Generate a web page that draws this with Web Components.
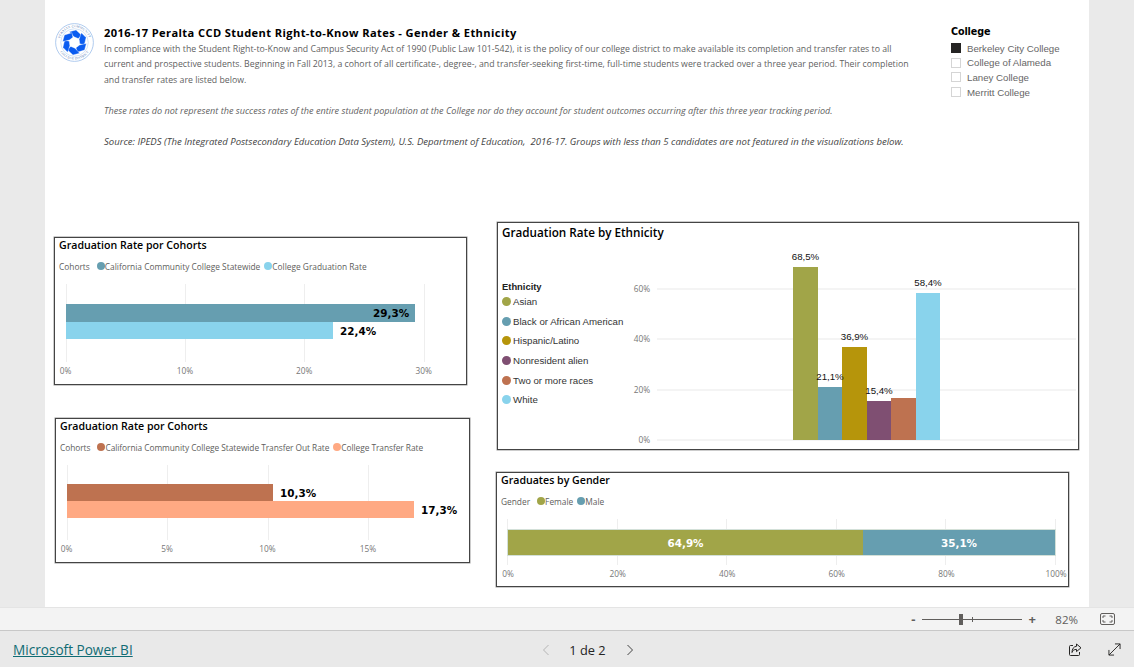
<!DOCTYPE html>
<html lang="en">

<head>
	<meta charset="UTF-8">
	<title>Peralta CCD Student Right-to-Know Rates</title>
	<style>
		html, body { margin: 0; height: 100%; overflow: hidden; background: #eaeaea; }
	</style>
</head>

<body>
	<report-page>
		<report-intro slot="intro"></report-intro>
		<college-slicer slot="intro"></college-slicer>

		<chart-card slot="left" style="--w:413px;--h:148px;--ml:0px;--mt:15px;--title-x:4px" heading="Graduation Rate por Cohorts" legend="Cohorts"
			items='[["California Community College Statewide","#669eb0"],["College Graduation Rate","#89d3ec"]]'>
			<hbar-plot style="--ph:78px;--pt:12px"
				left="10.5" step="119.4" ticks='["0%","10%","20%","30%"]' top="20"
				bars='[[349.5,18,"#669eb0","29,3%",318],[267.5,17,"#89d3ec","22,4%",285]]'></hbar-plot>
		</chart-card>
		<chart-card slot="left" style="--w:415px;--h:145px;--ml:1px;--mt:33px;--title-x:4px;--legend-ls:-.05px" heading="Graduation Rate por Cohorts" legend="Cohorts"
			items='[["California Community College Statewide Transfer Out Rate","#be7250"],["College Transfer Rate","#ffa983"]]'>
			<hbar-plot style="--ph:75px;--pt:12px"
				left="10.5" step="100.5" ticks='["0%","5%","10%","15%"]' top="19"
				bars='[[206.5,17,"#be7250","10,3%",224],[347.5,17,"#ffa983","17,3%",365]]'></hbar-plot>
		</chart-card>

		<ethnicity-card slot="right" style="--mt:0px"></ethnicity-card>
		<chart-card slot="right" style="--w:573px;--h:115px;--ml:-1px;--mt:22px;--title-x:4px" heading="Graduates by Gender" legend="Gender"
			items='[["Female","#a1a548"],["Male","#669eb0"]]'>
			<gender-plot></gender-plot>
		</chart-card>
	</report-page>

	<script>
		// helper: every element gets its own open shadow root
		class Base extends HTMLElement {
			render(html) {
				if (!this.shadowRoot) this.attachShadow({ mode: 'open' });
				this.shadowRoot.innerHTML = html;
			}
		}

		const SEGOE = '"Open Sans", "Noto Sans", sans-serif';

		class ReportPage extends Base {
			connectedCallback() {
				this.render(`
				<style>
					:host { display: grid; grid-template-rows: 607px 24px 36px; height: 667px; width: 1134px; }
					.canvas { width: 1044px; margin-left: 45px; background: #fff; display: grid;
						grid-template-columns: 451px 1fr; grid-template-rows: 222px 1fr; }
					.top { grid-column: 1 / 3; display: flex; justify-content: space-between; }
					.col { display: flex; flex-direction: column; align-items: flex-start; }
					.left { padding-left: 9px; }
					.right { padding-left: 1px; }
				</style>
				<div class="canvas">
					<div class="top"><slot name="intro"></slot></div>
					<div class="col left"><slot name="left"></slot></div>
					<div class="col right"><slot name="right"></slot></div>
				</div>
				<report-toolbar></report-toolbar>
				<report-footer></report-footer>`);
			}
		}

		class ReportIntro extends Base {
			connectedCallback() {
				// blade of the pinwheel, rotated six times
				let blades = '';
				for (let i = 0; i < 6; i++) {
					blades += `<path transform="rotate(${i * 60} 19 19)" d="M14 8.5 L20.5 6.8 L26 12 L22.6 15.2 L18.5 13.5 Z" fill="#0a5cf0" stroke="#fff" stroke-width=".35"/>`;
				}
				this.render(`
				<style>
					:host { display: flex; padding: 23px 0 0 10px; font-family: ${SEGOE}; }
					svg { flex: none; width: 39px; height: 39px; margin-right: 10px; }
					.text { width: 830px; margin-top: 2px; }
					h1 { margin: 0; font: 700 11.1px/16.5px ${SEGOE}; color: #000; letter-spacing: .4px; }
					p { margin: 0; font-size: 8.75px; line-height: 15.6px; color: #5f5f5f; }
					p.i { font-style: italic; font-size: 9.1px; margin-top: 15px; }
					p.s { font-style: italic; font-size: 9.55px; margin-top: 15.5px; color: #444; }
				</style>
				<svg viewBox="0 0 38 38">
					<circle cx="19" cy="19" r="18.4" fill="#fff" stroke="#9fc0ea" stroke-width=".8"/>
					<circle cx="19" cy="19" r="13.4" fill="#fff" stroke="#b5cfee" stroke-width=".6"/>
					<defs>
						<path id="top" d="M4.2 19 A14.8 14.8 0 0 1 33.8 19"/>
						<path id="bot" d="M2.4 19 A16.6 16.6 0 0 0 35.6 19"/>
					</defs>
					<text font-family="Liberation Serif" font-size="3.1" fill="#4c74b0" letter-spacing=".25"><textPath href="#top" startOffset="50%" text-anchor="middle">PERALTA COMMUNITY</textPath></text>
					<text font-family="Liberation Serif" font-size="3.1" fill="#4c74b0" letter-spacing=".25"><textPath href="#bot" startOffset="50%" text-anchor="middle">COLLEGE DISTRICT</textPath></text>
					${blades}
				</svg>
				<div class="text">
					<h1>2016-17 Peralta CCD Student Right-to-Know Rates - Gender &amp; Ethnicity</h1>
					<p>In compliance with the Student Right-to-Know and Campus Security Act of 1990 (Public Law 101-542), it is the policy of our college district to make available its completion and transfer rates to all<br>current and prospective students. Beginning in Fall 2013, a cohort of all certificate-, degree-, and transfer-seeking first-time, full-time students were tracked over a three year period. Their completion<br>and transfer rates are listed below.</p>
					<p class="i">These rates do not represent the success rates of the entire student population at the College nor do they account for student outcomes occurring after this three year tracking period.</p>
					<p class="s">Source: IPEDS (The Integrated Postsecondary Education Data System), U.S. Department of Education,&nbsp; 2016-17. Groups with less than 5 candidates are not featured in the visualizations below.</p>
				</div>`);
			}
		}

		class CollegeSlicer extends Base {
			connectedCallback() {
				const names = ['Berkeley City College', 'College of Alameda', 'Laney College', 'Merritt College'];
				this.render(`
				<style>
					:host { display: block; width: 138px; padding-top: 26px; font-family: "Liberation Sans", Arial, sans-serif; }
					h2 { margin: 0 0 3px; font: 700 9.6px/12px "DejaVu Sans", sans-serif; color: #000; letter-spacing: -.1px; }
					.row { display: flex; align-items: center; height: 14.6px; font-size: 9.7px; color: #666; }
					i { width: 8px; height: 8px; border: 1px solid #d5d5d5; margin-right: 6px; }
					i.on { background: #252423; border-color: #252423; }
				</style>
				<h2>College</h2>
				${names.map((n, i) => `<div class="row"><i class="${i == 0 ? 'on' : ''}"></i>${n}</div>`).join('')}`);
			}
		}

		class ChartCard extends Base {
			connectedCallback() {
				const items = JSON.parse(this.getAttribute('items'));
				this.render(`
				<style>
					:host { display: block; box-sizing: border-box; width: var(--w); height: var(--h); margin: var(--mt) 0 0 var(--ml);
						border: 1px solid #444; box-shadow: 0 0 0 .5px #999; background: #fff; font-family: ${SEGOE}; }
					h3 { margin: 0; padding: 0 0 0 var(--title-x); font: 600 10.6px/14px ${SEGOE}; color: #000; }
					.legend { display: flex; align-items: center; height: 12px; margin-top: 8px; padding-left: var(--title-x);
						font-size: 8.35px; letter-spacing: var(--legend-ls, 0); color: #605e5c; white-space: nowrap; }
					.legend b { font-weight: 400; margin-right: 7px; }
					.legend i { width: 8px; height: 8px; border-radius: 50%; flex: none; }
					.legend span { margin-right: 4px; }
				</style>
				<h3>${this.getAttribute('heading')}</h3>
				<div class="legend"><b>${this.getAttribute('legend')}</b>
					${items.map(it => `<i style="background:${it[1]}"></i><span>${it[0]}</span>`).join('')}
				</div>
				<slot></slot>`);
			}
		}

		class HbarPlot extends Base {
			connectedCallback() {
				const ticks = JSON.parse(this.getAttribute('ticks'));
				const bars = JSON.parse(this.getAttribute('bars'));
				const left = +this.getAttribute('left');
				const step = +this.getAttribute('step');
				let y = +this.getAttribute('top');
				// bar: width, height, colour, label, label x
				const marks = bars.map(b => {
					const s = `<div class="bar" style="left:${left}px;top:${y}px;width:${b[0]}px;height:${b[1]}px;background:${b[2]}"></div>
						<div class="val" style="left:${b[4]}px;top:${y}px;height:${b[1]}px">${b[3]}</div>`;
					y += b[1];
					return s;
				}).join('');
				this.render(`
				<style>
					:host { display: block; position: relative; height: var(--ph); margin-top: var(--pt); font-family: ${SEGOE}; }
					.grid { position: absolute; top: 0; bottom: 0; width: 1px; background: #eeeeee; }
					.bar { position: absolute; }
					.val { position: absolute; display: flex; align-items: center; font: 700 10.4px "DejaVu Sans", sans-serif; color: #000; }
					.tick { position: absolute; top: calc(100% + 3px); width: 40px; margin-left: -20px; text-align: center; font-size: 8.3px; line-height: 12px; color: #777; }
				</style>
				${ticks.map((t, i) => `<div class="grid" style="left:${left + i * step}px"></div><div class="tick" style="left:${left + i * step}px">${t}</div>`).join('')}
				${marks}`);
			}
		}

		class GenderPlot extends Base {
			connectedCallback() {
				const ticks = ['0%', '20%', '40%', '60%', '80%', '100%'];
				this.render(`
				<style>
					:host { display: block; position: relative; height: 46px; margin-top: 12px; font-family: ${SEGOE}; }
					.grid { position: absolute; top: 0; bottom: 0; width: 1px; background: #eeeeee; }
					.tick { position: absolute; top: calc(100% + 3px); width: 40px; margin-left: -20px; text-align: center; font-size: 8.3px; line-height: 12px; color: #777; }
					.stack { position: absolute; left: 10px; top: 10px; width: 549px; height: 27px; display: flex;
						box-sizing: border-box; border: 1px solid #d3e0d8; }
					.stack div { display: flex; align-items: center; justify-content: center; font: 700 10.4px "DejaVu Sans", sans-serif; color: #fff; }
				</style>
				${ticks.map((t, i) => `<div class="grid" style="left:${10 + i * 109.6}px"></div><div class="tick" style="left:${11 + i * 109.6}px">${t}</div>`).join('')}
				<div class="stack">
					<div style="width:355px;background:#a1a548">64,9%</div>
					<div style="flex:1;background:#669eb0">35,1%</div>
				</div>`);
			}
		}

		class EthnicityCard extends Base {
			connectedCallback() {
				const legend = [['Asian', '#a1a548'], ['Black or African American', '#669eb0'], ['Hispanic/Latino', '#b6950b'],
					['Nonresident alien', '#7f4f72'], ['Two or more races', '#be7250'], ['White', '#89d3ec']];
				// x offset, width, height, colour, label of each column; one column has no label in the reference
				const cols = [[0, 25, 173, '#a1a548', '68,5%'], [25, 24, 53, '#669eb0', '21,1%'], [49, 25, 93, '#b6950b', '36,9%'],
					[74, 24, 39, '#7f4f72', '15,4%'], [98, 25, 42, '#be7250', ''], [123, 24, 147, '#89d3ec', '58,4%']];
				const base = 218; // y of the 0% line inside the plot
				this.render(`
				<style>
					:host { display: flex; flex-direction: column; box-sizing: border-box; width: 582px; height: 228px; margin-top: var(--mt);
						border: 1px solid #444; box-shadow: 0 0 0 .5px #999; background: #fff; font-family: ${SEGOE}; }
					h3 { margin: 0; padding: 1px 0 0 4px; font: 600 11.7px/16px ${SEGOE}; color: #000; }
					.body { position: relative; flex: 1; display: flex; }
					.legend { position: relative; width: 150px; padding: 40px 0 0 4px; font-family: "Liberation Sans", Arial, sans-serif; font-size: 9.7px; color: #333; }
					.legend h4 { margin: 0 0 -1px; font: 700 9.4px/13px "Liberation Sans", sans-serif; color: #222; }
					.row { display: flex; align-items: center; height: 19.6px; white-space: nowrap; }
					.row i { width: 9px; height: 9px; border-radius: 50%; margin-right: 2px; flex: none; }
					.plot { position: absolute; left: 0; top: -18px; right: 0; bottom: 0; }
					.line { position: absolute; left: 159px; width: 419px; height: 2px; background: #f4f4f4; }
					.yl { position: absolute; left: 120px; width: 32px; text-align: right; font-size: 8.3px; line-height: 12px; color: #777; }
					.col { position: absolute; }
					.lab { position: absolute; width: 50px; text-align: center; font: 9.7px/12px "Liberation Sans", sans-serif; color: #111; }
				</style>
				<h3>Graduation Rate by Ethnicity</h3>
				<div class="body">
					<div class="plot">
						${[0, 20, 40, 60].map((v, i) => `<div class="line" style="top:${base - i * 50.3 - 1}px"></div><div class="yl" style="top:${base - i * 50.3 - 6}px">${v}%</div>`).join('')}
						${cols.map(c => `<div class="col" style="left:${295 + c[0]}px;top:${base - c[2]}px;width:${c[1]}px;height:${c[2]}px;background:${c[3]}"></div>`).join('')}
						${cols.map(c => c[4] ? `<div class="lab" style="left:${295 + c[0] + c[1] / 2 - 25}px;top:${base - c[2] - 16}px">${c[4]}</div>` : '').join('')}
					</div>
					<div class="legend">
						<h4>Ethnicity</h4>
						${legend.map(l => `<div class="row"><i style="background:${l[1]}"></i>${l[0]}</div>`).join('')}
					</div>
				</div>`);
			}
		}

		class ReportToolbar extends Base {
			connectedCallback() {
				this.render(`
				<style>
					:host { display: flex; align-items: center; justify-content: flex-end; box-sizing: border-box; background: #f3f3f3;
						border-top: 1px solid #e4e4e4; border-bottom: 1px solid #c8c8c8; font-family: ${SEGOE}; color: #605e5c; }
					.sign { font-size: 13px; font-weight: 700; line-height: 1; width: 10px; text-align: center; }
					.slider { position: relative; width: 100px; height: 1px; background: #605e5c; margin: 0 5px 0 4px; }
					.thumb { position: absolute; left: 37px; top: -5px; width: 4px; height: 11px; background: #605e5c; }
					.mark { position: absolute; left: 50px; top: -2px; width: 1px; height: 5px; background: #605e5c; }
					.pct { font-size: 11.5px; margin: 0 22px 0 18px; }
					svg { width: 15px; height: 12px; margin-right: 19px; }
				</style>
				<span class="sign">-</span>
				<div class="slider"><div class="thumb"></div><div class="mark"></div></div>
				<span class="sign">+</span>
				<span class="pct">82%</span>
				<svg viewBox="0 0 15 12" fill="none" stroke="#605e5c">
					<rect x=".5" y=".5" width="14" height="11" rx="1.5"/>
					<path d="M3 5V3H5.5M9.5 3H12V5M12 7V9H9.5M5.5 9H3V7"/>
				</svg>`);
			}
		}

		class ReportFooter extends Base {
			connectedCallback() {
				this.render(`
				<style>
					:host { display: grid; grid-template-columns: 1fr auto 1fr; align-items: center; background: #e9e9e9; padding: 1px 13px 0 13px; font-family: ${SEGOE}; }
					a { font-size: 13.6px; color: #106c74; text-decoration: underline; justify-self: start; }
					.pager { display: flex; align-items: center; margin-left: 42px; font-size: 12.8px; color: #252423; }
					.pager span { margin: 0 20px 0 19px; }
					.tools { justify-self: end; display: flex; gap: 26px; }
					svg { display: block; }
				</style>
				<a href="#">Microsoft Power BI</a>
				<div class="pager">
					<svg width="8" height="12" viewBox="0 0 8 12" fill="none" stroke="#b5b5b5"><path d="M6.5 1 1.5 6l5 5"/></svg>
					<span>1 de 2</span>
					<svg width="8" height="12" viewBox="0 0 8 12" fill="none" stroke="#444"><path d="M1.5 1l5 5-5 5"/></svg>
				</div>
				<div class="tools">
					<svg width="14" height="14" viewBox="0 0 14 14" fill="none" stroke="#252423">
						<path d="M5 2.5H2.5a1 1 0 0 0-1 1v8a1 1 0 0 0 1 1h8a1 1 0 0 0 1-1V9"/>
						<path d="M8.5 1 13 4.8 8.5 8.6V6.4C6.2 6.4 4.8 7.3 4 9.5 4 6 5.6 3.6 8.5 3.3Z"/>
					</svg>
					<svg width="13" height="13" viewBox="0 0 14 14" fill="none" stroke="#252423">
						<path d="M1 13 13 1M7.5 1H13V6.5M1 7.5V13H6.5"/>
					</svg>
				</div>`);
			}
		}

		customElements.define('report-page', ReportPage);
		customElements.define('report-intro', ReportIntro);
		customElements.define('college-slicer', CollegeSlicer);
		customElements.define('chart-card', ChartCard);
		customElements.define('hbar-plot', HbarPlot);
		customElements.define('gender-plot', GenderPlot);
		customElements.define('ethnicity-card', EthnicityCard);
		customElements.define('report-toolbar', ReportToolbar);
		customElements.define('report-footer', ReportFooter);
	</script>
</body>

</html>
